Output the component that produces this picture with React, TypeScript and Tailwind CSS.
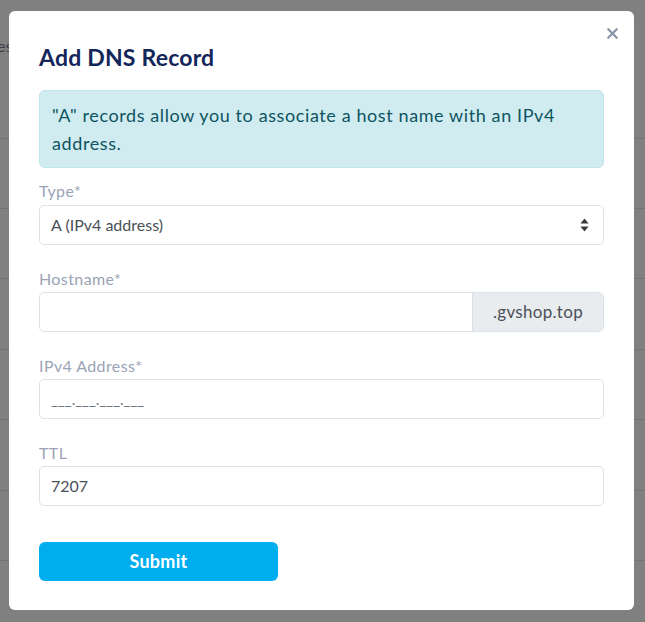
import { X } from "lucide-react";

const font = { fontFamily: "Lato, 'Noto Sans', sans-serif" };

function Label({ children }: { children: React.ReactNode }) {
  return <div className="text-[16px] leading-6 tracking-[0.4px] text-[#9aa3b5]">{children}</div>;
}

export default function App() {
  const rows = [138, 208, 278, 349, 419, 490, 560];
  return (
    <div className="relative h-[622px] w-[645px] overflow-hidden bg-[#808080]" style={font}>
      {/* page behind the overlay */}
      <div className="absolute left-[-3px] top-[34px] text-[16px] text-[#3a3f4b]">es</div>
      {rows.map((y) => (
        <div key={y} className="absolute left-0 right-0 h-px bg-[#737373]" style={{ top: y }} />
      ))}

      {/* modal */}
      <div className="absolute left-[9px] top-[11px] h-[599px] w-[625px] rounded-md bg-white px-[30px] pt-[32px]">
        <button className="absolute right-[13px] top-[14px] text-[#8a94a6]">
          <X size={17} strokeWidth={3.2} />
        </button>
        <h2 className="text-[23px] font-bold leading-7 tracking-[0.2px] text-[#13265a]">Add DNS Record</h2>

        <div className="mt-[19px] rounded-md border border-[#bee5eb] bg-[#d1ecf1] px-[12px] py-[10px] text-[18px] leading-7 tracking-[0.6px] text-[#0c5460]">
          "A" records allow you to associate a host name with an IPv4 address.
        </div>

        <div className="mt-[11px]">
          <Label>Type*</Label>
          <div className="mt-[2px] flex h-[40px] items-center justify-between rounded-[5px] border border-[#dee2e6] pl-[11px] pr-[14px] text-[16px] text-[#495057]">
            <span>A (IPv4 address)</span>
            <svg width="9" height="14" viewBox="0 0 9 14" fill="#343a40">
              <path d="M4.5 0.5 L8.5 5.5 H0.5 Z" />
              <path d="M4.5 13.5 L8.5 8.5 H0.5 Z" />
            </svg>
          </div>
        </div>

        <div className="mt-[22px]">
          <Label>Hostname*</Label>
          <div className="mt-[1px] flex h-[40px] rounded-[5px] border border-[#dee2e6]">
            <div className="flex-1" />
            <div className="flex w-[131px] items-center justify-center rounded-r-[5px] border-l border-[#dee2e6] bg-[#e9ecef] text-[17px] tracking-[0.3px] text-[#495057]">
              .gvshop.top
            </div>
          </div>
        </div>

        <div className="mt-[22px]">
          <Label>IPv4 Address*</Label>
          <div className="mt-[1px] flex h-[40px] items-center rounded-[5px] border border-[#dee2e6] pl-[11px] text-[15px] text-[#6c757d]">
            ___.___.___.___
          </div>
        </div>

        <div className="mt-[22px]">
          <Label>TTL</Label>
          <div className="mt-[1px] flex h-[40px] items-center rounded-[5px] border border-[#dee2e6] pl-[11px] text-[16px] text-[#495057]">
            7207
          </div>
        </div>

        <button className="mt-[36px] h-[39px] w-[239px] rounded-md bg-[#00aeef] text-[18px] font-bold tracking-[0.3px] text-white">
          Submit
        </button>
      </div>
    </div>
  );
}
